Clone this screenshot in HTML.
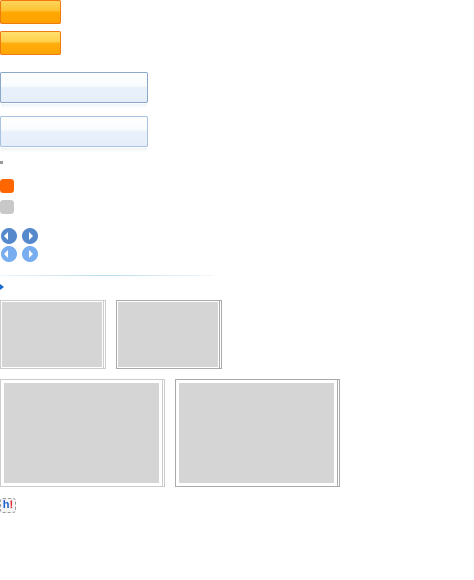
<!DOCTYPE html>
<html><head><style>
body{margin:0;width:474px;height:580px;background:#fff;position:relative;overflow:hidden;font-family:"Liberation Sans",sans-serif}
div{position:absolute;box-sizing:border-box}
.ob{left:0;width:61px;height:24px;border:1px solid #f07a10;border-radius:2px;background:linear-gradient(#ffd45a 0%,#ffc233 45%,#ffa800 50%,#ffa200 100%)}
.in{left:0;width:148px;height:31px;border:1px solid #8aa8c8;border-radius:2px;background:linear-gradient(#fff 0%,#f8fbfe 45%,#e9f1fc 50%,#e6eefb 100%)}
.sh{left:1px;width:146px;height:4px;background:linear-gradient(#eef2f6,#fff)}
.c{width:16px;height:16px;border-radius:50%}
.c:after{content:"";position:absolute;top:4px;border:4px solid transparent}
.l:after{left:3px;border-right:4px solid #fff;border-left:0}
.r:after{left:7px;border-left:4px solid #fff;border-right:0}
.box{background:#d5d5d5}
</style></head><body>
<div class="ob" style="top:0"></div>
<div class="ob" style="top:31px;background:linear-gradient(#ffe070 0%,#ffcf4a 45%,#ffae10 50%,#ffa500 100%)"></div>
<div class="in" style="top:72px"></div>
<div class="sh" style="top:104px"></div>
<div class="in" style="top:116px;border-color:#a8c2e0"></div>
<div class="sh" style="top:148px"></div>
<div style="left:0;top:161px;width:3px;height:3px;background:#999"></div>
<div style="left:0;top:179px;width:14px;height:14px;border-radius:3px;background:#ff6600"></div>
<div style="left:0;top:200px;width:14px;height:14px;border-radius:3px;background:#c8c8c8"></div>
<div class="c l" style="left:1px;top:228px;background:#5589cc"></div>
<div class="c r" style="left:22px;top:228px;background:#5589cc"></div>
<div class="c l" style="left:1px;top:246px;background:#78adf0"></div>
<div class="c r" style="left:22px;top:246px;background:#78adf0"></div>
<div style="left:0;top:275px;width:213px;height:1px;background:linear-gradient(90deg,#eef6fc,#b8dcf0 50%,#f4f8fc)"></div>
<div style="left:0;top:284px;border:3px solid transparent;border-left:4px solid #1a6ad0;border-right:0"></div>
<div style="left:0;top:300px;width:106px;height:69px;border:1px solid #ccc"></div>
<div style="left:103px;top:300px;width:1px;height:69px;background:#ccc"></div>
<div class="box" style="left:2px;top:302px;width:100px;height:65px"></div>
<div style="left:116px;top:300px;width:106px;height:69px;border:1px solid #aaa"></div>
<div style="left:219px;top:300px;width:1px;height:69px;background:#aaa"></div>
<div class="box" style="left:118px;top:302px;width:100px;height:65px"></div>
<div style="left:0;top:379px;width:165px;height:108px;border:1px solid #ccc"></div>
<div style="left:162px;top:379px;width:1px;height:108px;background:#ccc"></div>
<div class="box" style="left:4px;top:383px;width:155px;height:100px"></div>
<div style="left:175px;top:379px;width:165px;height:108px;border:1px solid #aaa"></div>
<div style="left:337px;top:379px;width:1px;height:108px;background:#aaa"></div>
<div class="box" style="left:179px;top:383px;width:155px;height:100px"></div>
<div style="left:0;top:498px;width:16px;height:15px;border:1px dashed #999;border-radius:3px;background:#f4f4f4;font:bold 11px/13px 'Liberation Sans',sans-serif;text-align:center"><span style="color:#1a5fd0">h</span><span style="color:#e0202a">!</span></div>
</body></html>
